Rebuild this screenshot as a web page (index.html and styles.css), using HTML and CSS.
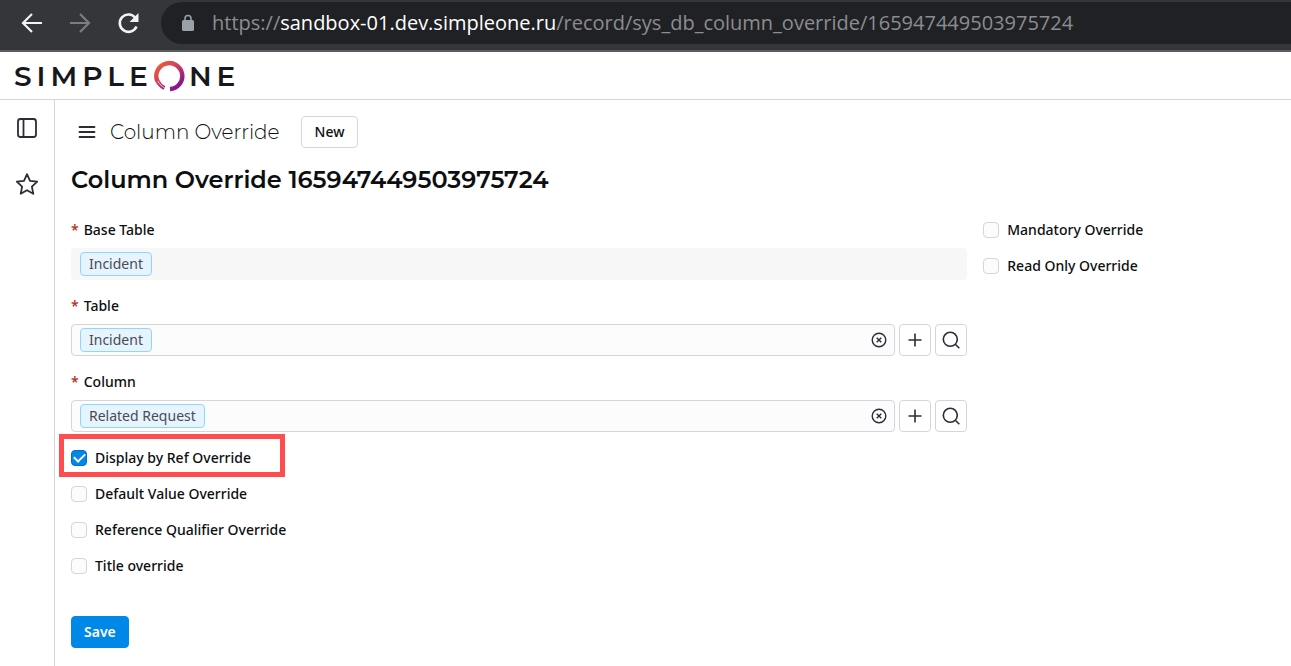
FILE: index.html
```html
<!DOCTYPE html>
<html lang="en">
<head>
<meta charset="utf-8">
<title>Column Override 165947449503975724</title>
<link rel="stylesheet" href="styles.css">
</head>
<body>
<div class="browser-bar">
  <nav class="browser-nav" aria-label="Browser">
    <button class="browser-btn" type="button" aria-label="Back"><svg width="24" height="24" viewBox="0 0 24 24" fill="none" stroke="currentColor" stroke-width="2.2"><path d="M22 12H3M12 3L3 12l9 9"/></svg></button>
    <button class="browser-btn browser-btn-off" type="button" aria-label="Forward"><svg width="24" height="24" viewBox="0 0 24 24" fill="none" stroke="currentColor" stroke-width="2.2"><path d="M2 12h19M12 3l9 9-9 9"/></svg></button>
    <button class="browser-btn" type="button" aria-label="Reload"><svg width="24" height="24" viewBox="0 0 24 24" fill="none" stroke="currentColor" stroke-width="2.6"><path d="M20.5 15.500A8.700 8.700 0 1 1 19.500 7"/><path d="M22.500 2v9h-9z" fill="currentColor" stroke="none"/></svg></button>
  </nav>
  <div class="address">
    <svg class="lock" width="14" height="18" viewBox="0 0 14 18"><rect x="1" y="6" width="12" height="11" rx="1.500" fill="#9aa0a6"/><path d="M4 7V4.500a3 3 0 0 1 6 0V7" fill="none" stroke="#9aa0a6" stroke-width="1.600"/></svg>
    <span class="url">https://<span class="url-host">sandbox-01.dev.simpleone.ru</span>/record/sys_db_column_override/165947449503975724</span>
  </div>
</div>
<header class="brand-bar">
  <a class="brand" href="#" aria-label="SimpleOne"><span>SIMPLE</span><svg class="brand-ring" width="32" height="32" viewBox="0 0 32 32"><defs><linearGradient id="ring" gradientUnits="userSpaceOnUse" x1="4" y1="5" x2="24" y2="28"><stop offset="0" stop-color="#ee5a3c"/><stop offset="0.450" stop-color="#cf3f5c"/><stop offset="1" stop-color="#82168f"/></linearGradient></defs><g fill="none" stroke="url(#ring)"><path stroke-width="4.400" d="M4.300 21A13 13 0 1 1 17 29"/><path stroke-width="2" d="M3 20.500c1.800 3.800 4.500 6.500 8 8.500"/><path stroke-width="1.500" d="M5.500 20c1.500 3.400 3.800 5.600 6.500 7"/></g></svg><span>NE</span></a>
</header>
<div class="layout">
  <aside class="side">
    <button class="icon-btn" type="button" aria-label="Toggle sidebar"><svg width="24" height="24" viewBox="0 0 24 24" fill="none" stroke="currentColor" stroke-width="1.800"><rect x="3" y="3" width="18" height="18" rx="2.500"/><path d="M8.500 3v18"/></svg></button>
    <button class="icon-btn" type="button" aria-label="Favorites"><svg width="24" height="24" viewBox="0 0 24 24" fill="none" stroke="currentColor" stroke-width="1.800" stroke-linejoin="round"><path d="M12 2.200l3 6.600 7.200.8-5.300 5 1.400 7.200L12 18.200l-6.300 3.600 1.400-7.200-5.300-5 7.200-.8z"/></svg></button>
  </aside>
  <main class="page">
    <div class="toolbar">
      <button class="icon-btn" type="button" aria-label="Menu"><svg width="24" height="24" viewBox="0 0 24 24" fill="none" stroke="currentColor" stroke-width="1.800" stroke-linecap="round"><path d="M4.500 7h15M4.500 12h15M4.500 17h15"/></svg></button>
      <span class="toolbar-title">Column Override</span>
      <button class="btn" type="button">New</button>
    </div>
    <h1 class="title">Column Override 165947449503975724</h1>
    <form class="form">
      <div class="main-col">
        <div class="field">
          <span class="label"><span class="req">*</span>Base Table</span>
          <div class="box box-readonly"><span class="tag">Incident</span></div>
        </div>
        <div class="field">
          <span class="label"><span class="req">*</span>Table</span>
          <div class="control">
            <div class="box"><span class="tag">Incident</span><button class="clear" type="button" aria-label="Clear table"><svg width="16" height="16" viewBox="0 0 16 16" fill="none" stroke="currentColor" stroke-width="1.400"><circle cx="8" cy="8" r="6.800"/><path d="M5.700 5.700l4.600 4.600M10.300 5.700l-4.600 4.600"/></svg></button></div>
            <button class="square" type="button" aria-label="Add table"><svg width="20" height="20" viewBox="0 0 20 20" fill="none" stroke="currentColor" stroke-width="1.600"><path d="M10 3.500v13M3.500 10h13"/></svg></button>
            <button class="square" type="button" aria-label="Find table"><svg width="20" height="20" viewBox="0 0 20 20" fill="none" stroke="currentColor" stroke-width="1.600"><circle cx="9.300" cy="9.300" r="7"/><path d="M14.300 14.300l4 4"/></svg></button>
          </div>
        </div>
        <div class="field">
          <span class="label"><span class="req">*</span>Column</span>
          <div class="control">
            <div class="box"><span class="tag">Related Request</span><button class="clear" type="button" aria-label="Clear column"><svg width="16" height="16" viewBox="0 0 16 16" fill="none" stroke="currentColor" stroke-width="1.400"><circle cx="8" cy="8" r="6.800"/><path d="M5.700 5.700l4.600 4.600M10.300 5.700l-4.600 4.600"/></svg></button></div>
            <button class="square" type="button" aria-label="Add column"><svg width="20" height="20" viewBox="0 0 20 20" fill="none" stroke="currentColor" stroke-width="1.600"><path d="M10 3.500v13M3.500 10h13"/></svg></button>
            <button class="square" type="button" aria-label="Find column"><svg width="20" height="20" viewBox="0 0 20 20" fill="none" stroke="currentColor" stroke-width="1.600"><circle cx="9.300" cy="9.300" r="7"/><path d="M14.300 14.300l4 4"/></svg></button>
          </div>
        </div>
        <div class="checks">
          <label class="check check-marked"><input type="checkbox" checked><span>Display by Ref Override</span></label>
          <label class="check"><input type="checkbox"><span>Default Value Override</span></label>
          <label class="check"><input type="checkbox"><span>Reference Qualifier Override</span></label>
          <label class="check"><input type="checkbox"><span>Title override</span></label>
        </div>
        <button class="btn btn-primary" type="button">Save</button>
      </div>
      <div class="checks">
        <label class="check"><input type="checkbox"><span>Mandatory Override</span></label>
        <label class="check"><input type="checkbox"><span>Read Only Override</span></label>
      </div>
    </form>
  </main>
</div>
</body>
</html>
```
FILE: styles.css
```css
* { box-sizing: border-box; }
body {
  margin: 0;
  min-height: 100vh;
  display: flex;
  flex-direction: column;
  background: #fff;
  color: #0d0e10;
  font: 14px/20px "Noto Sans", "Open Sans", sans-serif;
}
button { font: inherit; color: inherit; cursor: pointer; }
svg { display: block; }

.browser-bar {
  display: flex;
  gap: 21px;
  padding: 2px 0 6px 20px;
  background: #35363a;
  border-bottom: 2px solid #5c5d60;
}
.browser-nav { display: flex; align-items: center; gap: 24px; }
.browser-btn { padding: 0; border: 0; background: none; color: #f1f3f4; }
.browser-btn-off { color: #7c7d80; }
.address {
  flex: 1;
  display: flex;
  align-items: center;
  gap: 17px;
  height: 42px;
  padding-left: 20px;
  border-radius: 21px 0 0 21px;
  background: #202124;
}
.url {
  color: #8b8d91;
  font: 20px/28px "Open Sans", sans-serif;
  white-space: nowrap;
}
.url-host { color: #fff; }

.brand-bar {
  display: flex;
  align-items: center;
  height: 48px;
  padding-left: 14px;
  border-bottom: 1px solid #d5d6db;
}
.brand {
  display: flex;
  align-items: center;
  color: #17181c;
  font: 600 28px/32px Montserrat, Lato, sans-serif;
  letter-spacing: 5px;
  text-decoration: none;
}
.brand-ring { margin-right: 4px; }

.layout { flex: 1; display: flex; }
.side {
  display: flex;
  flex-direction: column;
  align-items: center;
  gap: 32px;
  width: 55px;
  padding-top: 16px;
  border-right: 1px solid #d5d6db;
}
.icon-btn { padding: 0; border: 0; background: none; color: #2c2d35; }
.page { flex: 1; padding: 16px 9px 18px 16px; }

.toolbar { display: flex; align-items: center; padding-left: 4px; }
.toolbar-title {
  margin: 0 21px 0 11px;
  font: 300 20px/28px Montserrat, Inter, sans-serif;
}
.btn {
  height: 32px;
  padding: 0 13px;
  border: 1px solid #d5d6db;
  border-radius: 4px;
  background: #fff;
  font-weight: 500;
}
.btn-primary {
  margin-top: 40px;
  padding: 0 12px;
  border-color: #0088e8;
  background: #0088e8;
  color: #fff;
  font-weight: 600;
}
.title {
  margin: 16px 0 24px;
  font: 600 24px/32px Montserrat, Inter, sans-serif;
}

.form { display: grid; grid-template-columns: 3fr 1fr; gap: 16px; }
.field { margin-bottom: 16px; }
.label { display: flex; gap: 5px; margin-bottom: 8px; font-weight: 500; }
.req { color: #b02a12; }
.control { display: flex; gap: 4px; }
.box {
  flex: 1;
  display: flex;
  align-items: center;
  justify-content: space-between;
  height: 32px;
  padding: 0 7px 0 8px;
  border: 1px solid #d5d6db;
  border-radius: 4px;
  background: #fcfcfc;
}
.box-readonly { border-color: #f7f7f7; background: #f7f7f7; }
.tag {
  padding: 1px 8px;
  border: 1px solid #91d5ff;
  border-radius: 4px;
  background: #e6f4ff;
  color: #4a4b52;
}
.clear { padding: 0; border: 0; background: none; color: #2c2d35; }
.square {
  display: grid;
  place-items: center;
  width: 32px;
  height: 32px;
  padding: 0;
  border: 1px solid #d5d6db;
  border-radius: 4px;
  background: #fff;
  color: #2c2d35;
}

.checks { display: flex; flex-direction: column; align-items: flex-start; gap: 16px; }
.check { position: relative; display: flex; align-items: center; gap: 8px; font-weight: 500; }
.check input {
  appearance: none;
  width: 16px;
  height: 16px;
  margin: 0;
  border: 1px solid #d5d6db;
  border-radius: 4px;
  background: #fcfcfc;
}
.check input:checked {
  display: grid;
  place-items: center;
  border-color: #006fc4;
  background: #0088e8;
}
.check input:checked::after {
  content: "";
  width: 9px;
  height: 5px;
  margin-bottom: 3px;
  border: solid #fff;
  border-width: 0 0 2px 2px;
  transform: rotate(-45deg);
}
.check-marked::before {
  content: "";
  position: absolute;
  inset: -14px -34px -9px -12px;
  border: 5px solid #ff4d4f;
}
```
